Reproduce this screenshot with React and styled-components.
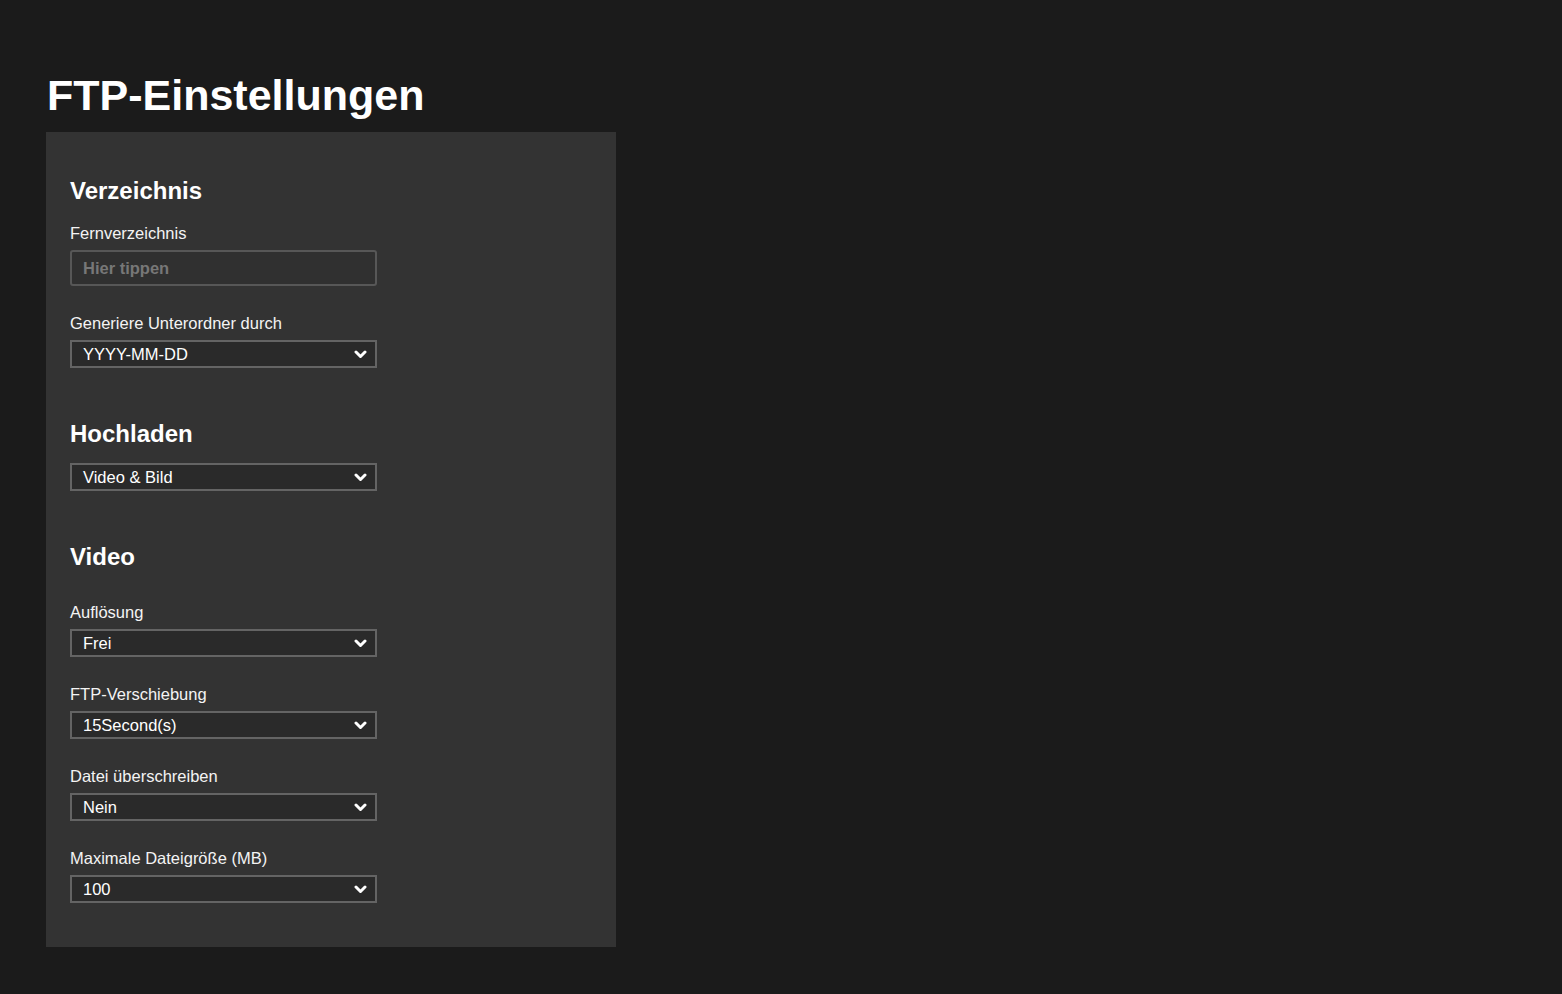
import React from 'react';
import styled, { createGlobalStyle } from 'styled-components';

const GlobalStyle = createGlobalStyle`
  html, body {
    margin: 0;
    padding: 0;
    background-color: #1b1b1b;
    color: #ffffff;
    font-family: "Liberation Sans", Arial, sans-serif;
  }
`;

const Page = styled.div`
  min-height: 994px;
  padding: 71px 46px 0;
  box-sizing: border-box;
`;

const Title = styled.h1`
  margin: 0 0 13px 1px;
  font-size: 43px;
  line-height: 48px;
  font-weight: 700;
`;

const Panel = styled.div`
  width: 570px;
  box-sizing: border-box;
  background-color: #333333;
  padding: 45px 24px 44px;
  display: flex;
  flex-direction: column;
  gap: 52px;
`;

const Section = styled.section`
  display: flex;
  flex-direction: column;
`;

const Heading = styled.h2`
  margin: 0 0 ${p => p.$gap || 18}px;
  font-size: 24px;
  line-height: 28px;
  font-weight: 700;
`;

const FieldList = styled.div`
  display: flex;
  flex-direction: column;
  gap: 27px;
`;

const Field = styled.div`
  display: flex;
  flex-direction: column;
  gap: 7px;
`;

const Label = styled.label`
  font-size: 16.5px;
  line-height: 20px;
  color: #f4f4f4;
`;

const TextInput = styled.input`
  width: 307px;
  height: 36px;
  box-sizing: border-box;
  border: 2px solid #575757;
  border-radius: 3px;
  background-color: #303030;
  color: #ffffff;
  padding: 0 11px;
  font-family: "Liberation Sans", Arial, sans-serif;
  font-size: 16.5px;
  font-weight: 700;
  outline: none;

  &::placeholder {
    color: #777777;
  }
`;

const SelectBox = styled.div`
  width: 307px;
  height: 28px;
  box-sizing: border-box;
  border: 2px solid #646464;
  background-color: #2a2a2a;
  display: flex;
  align-items: center;
  justify-content: space-between;
  padding: 0 8px 0 11px;
  font-size: 16.5px;
  color: #ffffff;
  cursor: pointer;
`;

const Chevron = () => (
  <svg width="13" height="9" viewBox="0 0 13 9">
    <polyline
      points="2,2 6.5,6.5 11,2"
      fill="none"
      stroke="#ffffff"
      strokeWidth="3"
      strokeLinecap="round"
      strokeLinejoin="round"
    />
  </svg>
);

const Select = ({ value }) => (
  <SelectBox>
    <span>{value}</span>
    <Chevron />
  </SelectBox>
);

const App = () => {
  return (
    <>
      <GlobalStyle />
      <Page>
        <Title>FTP-Einstellungen</Title>
        <Panel>
          <Section>
            <Heading>Verzeichnis</Heading>
            <FieldList>
              <Field>
                <Label>Fernverzeichnis</Label>
                <TextInput placeholder="Hier tippen" />
              </Field>
              <Field>
                <Label>Generiere Unterordner durch</Label>
                <Select value="YYYY-MM-DD" />
              </Field>
            </FieldList>
          </Section>

          <Section>
            <Heading $gap={15}>Hochladen</Heading>
            <Select value="Video & Bild" />
          </Section>

          <Section>
            <Heading $gap={31}>Video</Heading>
            <FieldList>
              <Field>
                <Label>Auflösung</Label>
                <Select value="Frei" />
              </Field>
              <Field>
                <Label>FTP-Verschiebung</Label>
                <Select value="15Second(s)" />
              </Field>
              <Field>
                <Label>Datei überschreiben</Label>
                <Select value="Nein" />
              </Field>
              <Field>
                <Label>Maximale Dateigröße (MB)</Label>
                <Select value="100" />
              </Field>
            </FieldList>
          </Section>
        </Panel>
      </Page>
    </>
  );
};

export default App;
